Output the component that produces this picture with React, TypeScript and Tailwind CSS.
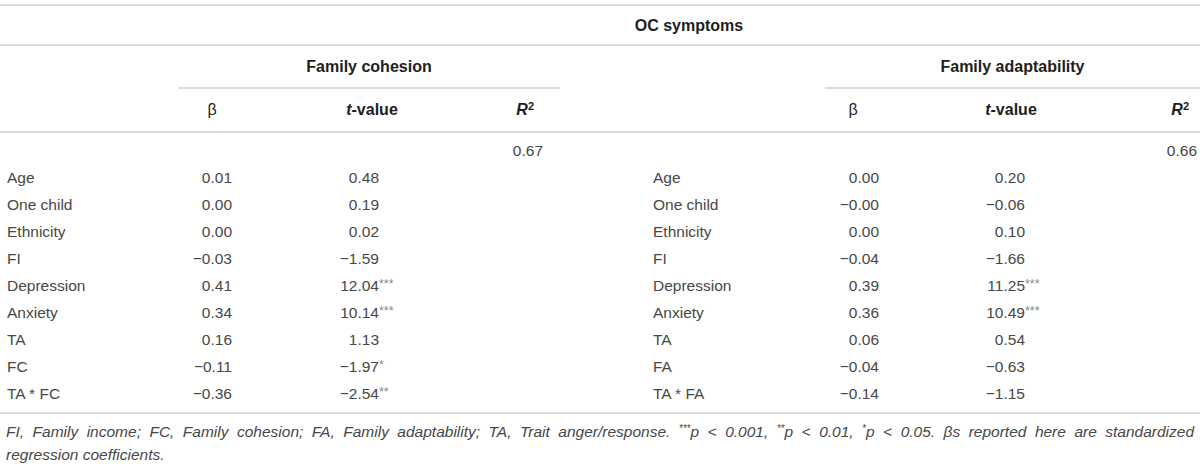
const cols = "grid grid-cols-[178px_68px_252px_62px_265px_56px_260px_59px]";

type Row = { label: string; b: string; t: string; s?: string };

const left: Row[] = [
  { label: "Age", b: "0.01", t: "0.48" },
  { label: "One child", b: "0.00", t: "0.19" },
  { label: "Ethnicity", b: "0.00", t: "0.02" },
  { label: "FI", b: "\u22120.03", t: "\u22121.59" },
  { label: "Depression", b: "0.41", t: "12.04", s: "***" },
  { label: "Anxiety", b: "0.34", t: "10.14", s: "***" },
  { label: "TA", b: "0.16", t: "1.13" },
  { label: "FC", b: "\u22120.11", t: "\u22121.97", s: "*" },
  { label: "TA * FC", b: "\u22120.36", t: "\u22122.54", s: "**" },
];

const right: Row[] = [
  { label: "Age", b: "0.00", t: "0.20" },
  { label: "One child", b: "\u22120.00", t: "\u22120.06" },
  { label: "Ethnicity", b: "0.00", t: "0.10" },
  { label: "FI", b: "\u22120.04", t: "\u22121.66" },
  { label: "Depression", b: "0.39", t: "11.25", s: "***" },
  { label: "Anxiety", b: "0.36", t: "10.49", s: "***" },
  { label: "TA", b: "0.06", t: "0.54" },
  { label: "FA", b: "\u22120.04", t: "\u22120.63" },
  { label: "TA * FA", b: "\u22120.14", t: "\u22121.15" },
];

function TVal({ t, s }: { t: string; s?: string }) {
  return (
    <>
      <span className="inline-block w-[50px] text-right">{t}</span>
      {s && <span className="relative -top-[3px] text-[12.5px] text-[#888]">{s}</span>}
    </>
  );
}

function RSq() {
  return (
    <span className="font-bold italic">
      R<sup className="not-italic text-[11px]">2</sup>
    </span>
  );
}

export default function App() {
  return (
    <div className="w-[1200px] h-[464px] bg-white pt-[4px] text-[15.5px] text-[#474747] font-['Liberation_Sans',Arial,sans-serif]">
      <div className="border-t-2 border-[#dcdcdc]" />

      {/* Spanner */}
      <div className={`${cols} h-[40px] items-center border-b-2 border-[#dcdcdc]`}>
        <div />
        <div className="col-span-7 text-center text-[16px] font-bold text-[#1e1e1e] pt-[1px]">OC symptoms</div>
      </div>

      <div className={`${cols} h-[43px] text-[16px] font-bold text-[#1e1e1e]`}>
        <div />
        <div className="col-span-3 flex items-center justify-center border-b-2 border-[#dcdcdc]">Family cohesion</div>
        <div />
        <div className="col-span-3 flex items-center justify-center border-b-2 border-[#dcdcdc]">Family adaptability</div>
      </div>

      {/* Column heads */}
      <div className={`${cols} h-[44px] items-center border-b-2 border-[#dcdcdc] text-[16px] text-[#1e1e1e]`}>
        <div />
        <div className="text-center">β</div>
        <div className="text-center font-bold"><span className="italic">t</span>-value</div>
        <div className="text-right pr-[26px]"><RSq /></div>
        <div />
        <div className="text-center">β</div>
        <div className="text-center font-bold"><span className="italic">t</span>-value</div>
        <div className="text-right pr-[11px]"><RSq /></div>
      </div>

      {/* Body */}
      <div className="pt-[4px] pb-[5px] border-b-2 border-[#dcdcdc]">
        <div className={`${cols} h-[27px] items-center`}>
          <div className="col-span-3" />
          <div className="text-right pr-[17px]">0.67</div>
          <div className="col-span-3" />
          <div className="text-right pr-[3px]">0.66</div>
        </div>
        {left.map((l, i) => {
          const r = right[i];
          return (
            <div key={i} className={`${cols} h-[27px] items-center`}>
              <div className="pl-[7px]">{l.label}</div>
              <div className="text-right pr-[14px]">{l.b}</div>
              <div className="pl-[83px] whitespace-nowrap"><TVal t={l.t} s={l.s} /></div>
              <div />
              <div className="pl-[93px]">{r.label}</div>
              <div className="text-right pr-[2px]">{r.b}</div>
              <div className="pl-[94px] whitespace-nowrap"><TVal t={r.t} s={r.s} /></div>
              <div />
            </div>
          );
        })}
      </div>

      {/* Footnote */}
      <div className="px-[6px] pt-[6px] italic leading-[23px] text-[#474747]">
        <p className="text-justify [text-align-last:justify]">
          FI, Family income; FC, Family cohesion; FA, Family adaptability; TA, Trait anger/response.{" "}
          <sup className="text-[10px]">***</sup>p &lt; 0.001, <sup className="text-[10px]">**</sup>p &lt; 0.01,{" "}
          <sup className="text-[10px]">*</sup>p &lt; 0.05. βs reported here are standardized
        </p>
        <p>regression coefficients.</p>
      </div>
    </div>
  );
}
